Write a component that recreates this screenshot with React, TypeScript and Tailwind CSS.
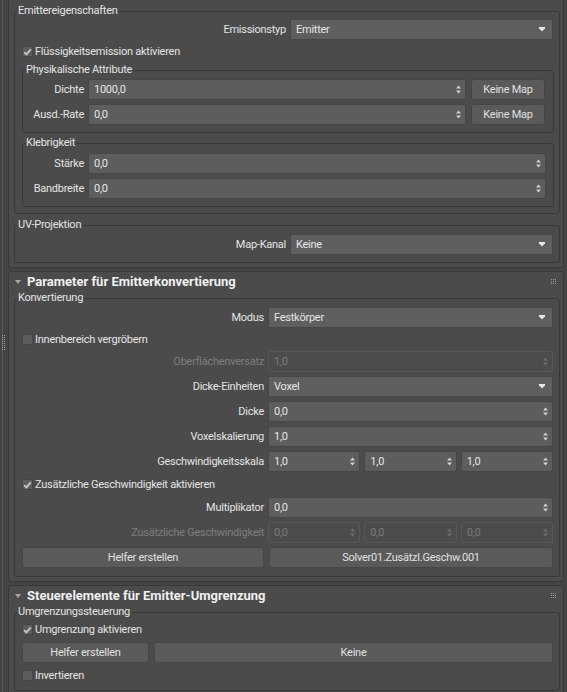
import React from "react";

function Arrow() {
  return (
    <svg width="6" height="5" viewBox="0 0 6 5" className="shrink-0">
      <path d="M0 0 H6 V1.2 L3 4.6 L0 1.2 Z" fill="#e8e8e8" />
    </svg>
  );
}

function SpinArrows({ disabled }: { disabled?: boolean }) {
  return (
    <svg width="5" height="9" viewBox="0 0 5 9" className="shrink-0">
      <path d="M0 3.6 L2.5 0.5 L5 3.6 Z M0 5.4 L5 5.4 L2.5 8.5 Z" fill={disabled ? "#6f6f6f" : "#d0d0d0"} />
    </svg>
  );
}

function Check({ checked }: { checked?: boolean }) {
  return (
    <span className="w-[11px] h-[11px] bg-[#5d5d5d] border border-[#454545] flex items-center justify-center shrink-0">
      {checked && (
        <svg width="9" height="8" viewBox="0 0 9 8">
          <path d="M1.2 4.2 L3.4 6.4 L7.8 1.4" stroke="#c8c8c8" strokeWidth="1.8" fill="none" />
        </svg>
      )}
    </span>
  );
}

function Spin({ value, disabled, className = "" }: { value: string; disabled?: boolean; className?: string }) {
  return (
    <div
      className={`h-[21px] flex items-center pl-[5px] pr-[4px] rounded-[2px] border ${
        disabled ? "bg-[#4c4c4c] border-[#575757] text-[#7b7b7b]" : "bg-[#5d5d5d] border-[#464646] text-[#e6e6e6]"
      } ${className}`}
    >
      <span className="flex-1 truncate">{value}</span>
      <SpinArrows disabled={disabled} />
    </div>
  );
}

function Drop({ value, className = "" }: { value: string; className?: string }) {
  return (
    <div className={`h-[21px] flex items-center pl-[5px] pr-[7px] rounded-[1px] border bg-[#5f5f5f] border-[#474747] text-[#e6e6e6] ${className}`}>
      <span className="flex-1">{value}</span>
      <Arrow />
    </div>
  );
}

function Btn({ label, className = "" }: { label: string; className?: string }) {
  return (
    <div className={`h-[21px] flex items-center justify-center rounded-[3px] border bg-[#5a5a5a] border-[#464646] text-[#e0e0e0] ${className}`}>
      {label}
    </div>
  );
}

function CheckRow({ label, checked, className = "" }: { label: string; checked?: boolean; className?: string }) {
  return (
    <div className={`h-[15px] flex items-center gap-[2px] ${className}`}>
      <Check checked={checked} />
      <span className="text-[#e4e4e4]">{label}</span>
    </div>
  );
}

function Legend({ children, className = "" }: { children: React.ReactNode; className?: string }) {
  return <legend className={`px-[1px] leading-[12px] text-[#e4e4e4] ${className}`}>{children}</legend>;
}

function Grip() {
  return (
    <div className="grid grid-cols-3 gap-[1px]">
      {Array.from({ length: 9 }).map((_, i) => (
        <span key={i} className="w-[1px] h-[1px] bg-[#9a9a9a]" />
      ))}
    </div>
  );
}

function Header({ title }: { title: string }) {
  return (
    <div className="h-[19px] flex items-center pl-[1px] pr-[4px]">
      <svg width="6" height="4" viewBox="0 0 6 4" className="shrink-0">
        <path d="M0 0 H6 L3 4 Z" fill="#a8a8a8" />
      </svg>
      <span className="ml-[6px] font-bold text-[13px] tracking-normal text-[#f0f0f0] flex-1">{title}</span>
      <Grip />
    </div>
  );
}

function Dots() {
  return (
    <div className="flex flex-col gap-[1px]">
      {Array.from({ length: 8 }).map((_, i) => (
        <span key={i} className="w-[1px] h-[1px] bg-[#a0a0a0]" />
      ))}
    </div>
  );
}

export default function App() {
  return (
    <div className="w-[567px] h-[692px] overflow-hidden bg-[#444444] flex font-['Roboto',Arial,sans-serif] text-[11px] leading-[13px] tracking-[-0.25px]">
      {/* left strip */}
      <div className="w-[8px] shrink-0 relative flex">
        <div className="ml-[2px] w-[1px] bg-[#555555] h-full" />
        <div className="absolute left-[2px] top-[335px] flex gap-[1px]">
          <Dots />
          <Dots />
        </div>
      </div>

      <div className="w-[556px] shrink-0 flex flex-col">
        {/* Rollout 1 */}
        <div className="bg-[#4b4b4b] border-x border-b border-[#383838] rounded-b-[3px] pl-[5px] pr-[3px] pt-[5px] pb-[4px]">
          <fieldset className="border border-[#383838] rounded-[3px] pl-[7px] pr-[6px] pb-[6px]">
            <Legend className="ml-[-5px]">Emittereigenschaften</Legend>
            <div className="mt-[2px] flex items-center gap-[4px] h-[21px]">
              <span className="w-[264px] text-right text-[#e4e4e4]">Emissionstyp</span>
              <Drop value="Emitter" className="flex-1" />
            </div>
            <CheckRow label="Flüssigkeitsemission aktivieren" checked className="mt-[4px]" />
            <fieldset className="mt-[5px] mr-[-1px] border border-[#383838] rounded-[3px] pl-[4px] pr-[8px] pb-[7px]">
              <Legend className="ml-[-2px]">Physikalische Attribute</Legend>
              <div className="mt-[3px] flex flex-col gap-[4px]">
                <div className="flex items-center gap-[4px]">
                  <span className="w-[57px] text-right text-[#e4e4e4]">Dichte</span>
                  <Spin value="1000,0" className="flex-1" />
                  <Btn label="Keine Map" className="w-[74px] ml-[1px]" />
                </div>
                <div className="flex items-center gap-[4px]">
                  <span className="w-[57px] text-right text-[#e4e4e4]">Ausd.-Rate</span>
                  <Spin value="0,0" className="flex-1" />
                  <Btn label="Keine Map" className="w-[74px] ml-[1px]" />
                </div>
              </div>
            </fieldset>
            <fieldset className="mt-[4px] mr-[-1px] border border-[#383838] rounded-[3px] pl-[4px] pr-[7px] pb-[7px]">
              <Legend className="ml-[-2px]">Klebrigkeit</Legend>
              <div className="mt-[4px] flex flex-col gap-[4px]">
                <div className="flex items-center gap-[4px]">
                  <span className="w-[57px] text-right text-[#e4e4e4]">Stärke</span>
                  <Spin value="0,0" className="flex-1" />
                </div>
                <div className="flex items-center gap-[4px]">
                  <span className="w-[57px] text-right text-[#e4e4e4]">Bandbreite</span>
                  <Spin value="0,0" className="flex-1" />
                </div>
              </div>
            </fieldset>
          </fieldset>
          <fieldset className="mt-[5px] border border-[#383838] rounded-[3px] pl-[7px] pr-[6px] pb-[7px]">
            <Legend className="ml-[-5px]">UV-Projektion</Legend>
            <div className="mt-[3px] flex items-center gap-[4px] h-[21px]">
              <span className="w-[264px] text-right text-[#e4e4e4]">Map-Kanal</span>
              <Drop value="Keine" className="flex-1" />
            </div>
          </fieldset>
        </div>

        {/* Rollout 2 */}
        <div className="mt-[3px] bg-[#4b4b4b] border border-[#383838] rounded-[3px] pl-[5px] pr-[3px] pb-[4px]">
          <Header title="Parameter für Emitterkonvertierung" />
          <fieldset className="mt-[1px] border border-[#383838] rounded-[3px] pl-[7px] pr-[6px] pb-[8px]">
            <Legend className="ml-[-5px]">Konvertierung</Legend>
            <div className="mt-[3px] flex items-center gap-[4px] h-[21px]">
              <span className="w-[242px] text-right text-[#e4e4e4]">Modus</span>
              <Drop value="Festkörper" className="flex-1" />
            </div>
            <CheckRow label="Innenbereich vergröbern" className="my-[4px]" />
            <div className="flex flex-col gap-[4px]">
              <div className="flex items-center gap-[4px]">
                <span className="w-[242px] text-right text-[#7d7d7d]">Oberflächenversatz</span>
                <Spin value="1,0" disabled className="flex-1" />
              </div>
              <div className="flex items-center gap-[4px]">
                <span className="w-[242px] text-right text-[#e4e4e4]">Dicke-Einheiten</span>
                <Drop value="Voxel" className="flex-1" />
              </div>
              <div className="flex items-center gap-[4px]">
                <span className="w-[242px] text-right text-[#e4e4e4]">Dicke</span>
                <Spin value="0,0" className="flex-1" />
              </div>
              <div className="flex items-center gap-[4px]">
                <span className="w-[242px] text-right text-[#e4e4e4]">Voxelskalierung</span>
                <Spin value="1,0" className="flex-1" />
              </div>
              <div className="flex items-center gap-[4px]">
                <span className="w-[242px] text-right text-[#e4e4e4]">Geschwindigkeitsskala</span>
                <div className="flex-1 flex gap-[4px]">
                  <Spin value="1,0" className="flex-1" />
                  <Spin value="1,0" className="flex-1" />
                  <Spin value="1,0" className="flex-1" />
                </div>
              </div>
            </div>
            <CheckRow label="Zusätzliche Geschwindigkeit aktivieren" checked className="my-[5px]" />
            <div className="flex flex-col gap-[4px]">
              <div className="flex items-center gap-[4px]">
                <span className="w-[242px] text-right text-[#e4e4e4]">Multiplikator</span>
                <Spin value="0,0" className="flex-1" />
              </div>
              <div className="flex items-center gap-[4px]">
                <span className="w-[242px] text-right text-[#7d7d7d]">Zusätzliche Geschwindigkeit</span>
                <div className="flex-1 flex gap-[4px]">
                  <Spin value="0,0" disabled className="flex-1" />
                  <Spin value="0,0" disabled className="flex-1" />
                  <Spin value="0,0" disabled className="flex-1" />
                </div>
              </div>
              <div className="flex items-center gap-[5px]">
                <Btn label="Helfer erstellen" className="w-[242px]" />
                <Btn label="Solver01.Zusätzl.Geschw.001" className="flex-1" />
              </div>
            </div>
          </fieldset>
        </div>

        {/* Rollout 3 */}
        <div className="mt-[3px] bg-[#4b4b4b] border border-[#383838] rounded-[3px] pl-[5px] pr-[3px] pb-[4px]">
          <Header title="Steuerelemente für Emitter-Umgrenzung" />
          <fieldset className="mt-[1px] border border-[#383838] rounded-[3px] pl-[7px] pr-[6px] pb-[7px]">
            <Legend className="ml-[-5px]">Umgrenzungssteuerung</Legend>
            <CheckRow label="Umgrenzung aktivieren" checked className="mt-[4px]" />
            <div className="mt-[5px] flex items-center gap-[5px]">
              <Btn label="Helfer erstellen" className="w-[127px]" />
              <Btn label="Keine" className="flex-1" />
            </div>
            <CheckRow label="Invertieren" className="mt-[5px]" />
          </fieldset>
        </div>
      </div>
    </div>
  );
}
